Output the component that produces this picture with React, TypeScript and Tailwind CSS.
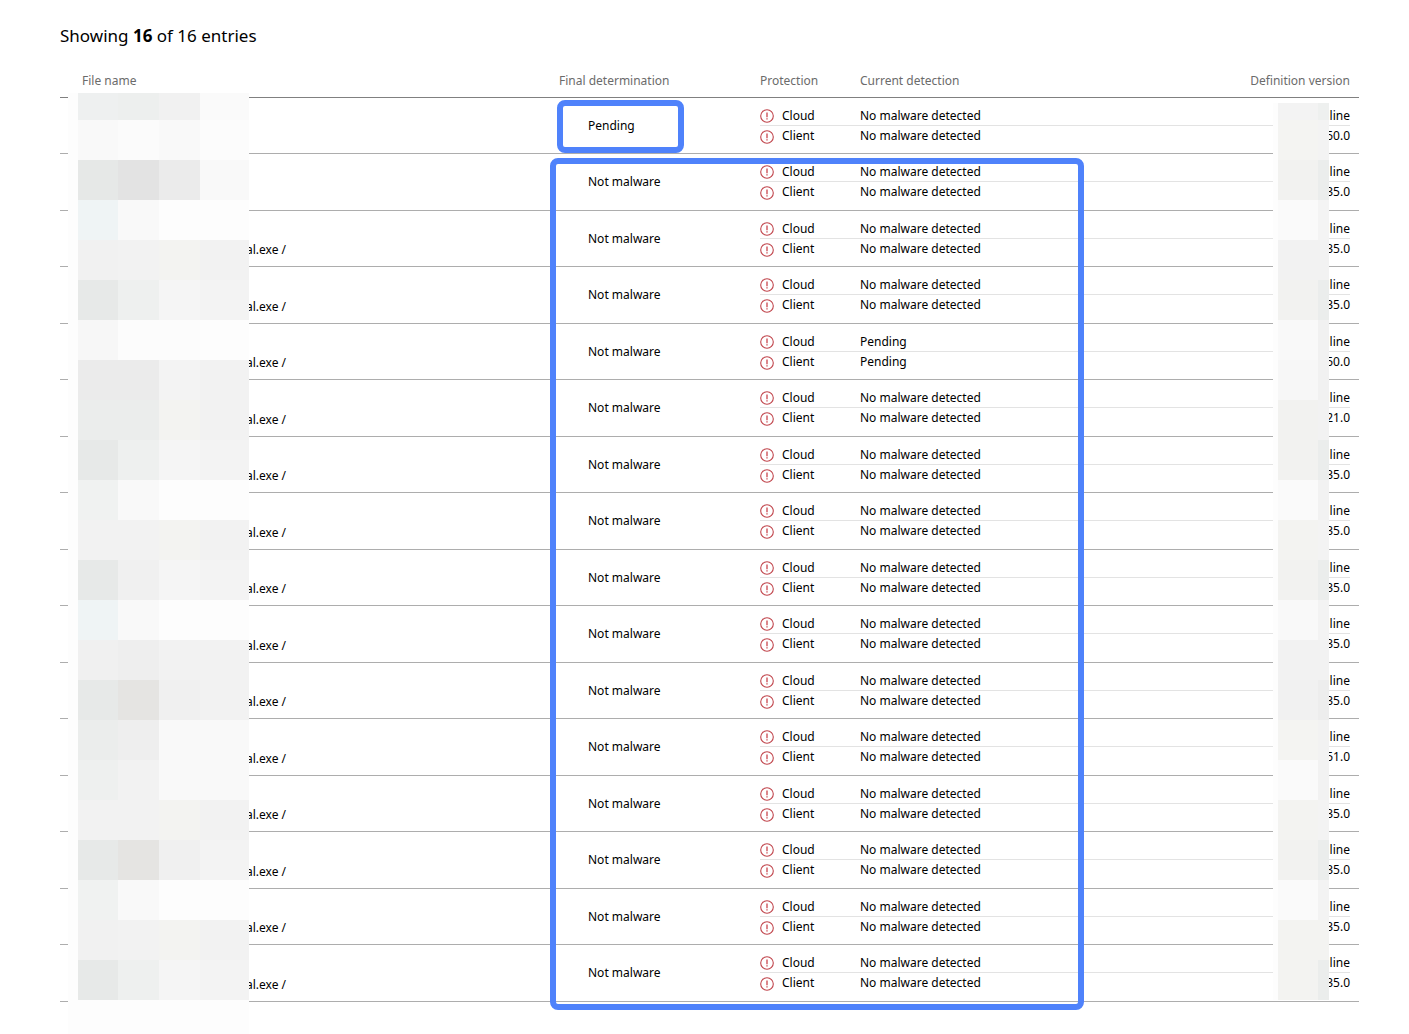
type Entry = {
  determination: string;
  detection: string;
  version: string;
  file?: string;
};

const entries: Entry[] = [
  { determination: 'Pending', detection: 'No malware detected', version: '50.0' },
  { determination: 'Not malware', detection: 'No malware detected', version: '35.0' },
  { determination: 'Not malware', detection: 'No malware detected', version: '35.0', file: 'al.exe /' },
  { determination: 'Not malware', detection: 'No malware detected', version: '35.0', file: 'al.exe /' },
  { determination: 'Not malware', detection: 'Pending', version: '50.0', file: 'al.exe /' },
  { determination: 'Not malware', detection: 'No malware detected', version: '21.0', file: 'al.exe /' },
  { determination: 'Not malware', detection: 'No malware detected', version: '35.0', file: 'al.exe /' },
  { determination: 'Not malware', detection: 'No malware detected', version: '35.0', file: 'al.exe /' },
  { determination: 'Not malware', detection: 'No malware detected', version: '35.0', file: 'al.exe /' },
  { determination: 'Not malware', detection: 'No malware detected', version: '35.0', file: 'al.exe /' },
  { determination: 'Not malware', detection: 'No malware detected', version: '35.0', file: 'al.exe /' },
  { determination: 'Not malware', detection: 'No malware detected', version: '51.0', file: 'al.exe /' },
  { determination: 'Not malware', detection: 'No malware detected', version: '35.0', file: 'al.exe /' },
  { determination: 'Not malware', detection: 'No malware detected', version: '35.0', file: 'al.exe /' },
  { determination: 'Not malware', detection: 'No malware detected', version: '35.0', file: 'al.exe /' },
  { determination: 'Not malware', detection: 'No malware detected', version: '35.0', file: 'al.exe /' },
];

// Pixelated blocks that hide the file names, one row of four tiles at a time.
const fileMosaic = [
  ['bg-[#eef0f0]', 'bg-[#edefee]', 'bg-[#f1f1f1]', 'bg-[#fafafa]'],
  ['bg-[#f9f9f9]', 'bg-[#fbfbfb]', 'bg-[#f9f9f9]', 'bg-[#fcfcfc]'],
  ['bg-[#e6e8e7]', 'bg-[#e3e3e3]', 'bg-[#ebebeb]', 'bg-[#f9f9f9]'],
  ['bg-[#eff4f5]', 'bg-[#f9f9f9]', 'bg-[#fdfdfd]', 'bg-[#fdfdfd]'],
  ['bg-[#f1f1f1]', 'bg-[#f2f2f2]', 'bg-[#f3f3f1]', 'bg-[#f2f2f2]'],
  ['bg-[#e7e9e8]', 'bg-[#eef0ef]', 'bg-[#f5f5f5]', 'bg-[#f3f3f3]'],
  ['bg-[#f7f7f7]', 'bg-[#fcfcfc]', 'bg-[#fcfcfc]', 'bg-[#fdfdfd]'],
  ['bg-[#ebebeb]', 'bg-[#ebebeb]', 'bg-[#f3f3f3]', 'bg-[#f2f2f2]'],
  ['bg-[#ebedec]', 'bg-[#ebedec]', 'bg-[#f3f3f1]', 'bg-[#f2f2f2]'],
  ['bg-[#e7e9e8]', 'bg-[#eef0ef]', 'bg-[#f5f5f5]', 'bg-[#f3f3f3]'],
  ['bg-[#f0f2f1]', 'bg-[#f9f9f9]', 'bg-[#fdfdfd]', 'bg-[#fdfdfd]'],
  ['bg-[#f2f2f2]', 'bg-[#f2f2f2]', 'bg-[#f3f3f1]', 'bg-[#f2f2f2]'],
  ['bg-[#e7e9e8]', 'bg-[#f0f0f0]', 'bg-[#f5f5f5]', 'bg-[#f3f3f3]'],
  ['bg-[#eff4f5]', 'bg-[#f9f9f9]', 'bg-[#fdfdfd]', 'bg-[#fdfdfd]'],
  ['bg-[#f0f0f0]', 'bg-[#eeeeee]', 'bg-[#f2f2f2]', 'bg-[#f2f2f2]'],
  ['bg-[#e7e9e8]', 'bg-[#e5e4e2]', 'bg-[#f0f0f0]', 'bg-[#f2f2f2]'],
  ['bg-[#ebedec]', 'bg-[#eeeeee]', 'bg-[#f9f9f9]', 'bg-[#f9f9f9]'],
  ['bg-[#eef0ef]', 'bg-[#f2f2f2]', 'bg-[#f9f9f9]', 'bg-[#f9f9f9]'],
  ['bg-[#f2f2f2]', 'bg-[#f2f2f2]', 'bg-[#f3f3f1]', 'bg-[#f2f2f2]'],
  ['bg-[#e7e9e8]', 'bg-[#e5e4e2]', 'bg-[#f0f0f0]', 'bg-[#f3f3f3]'],
  ['bg-[#f0f2f1]', 'bg-[#f9f9f9]', 'bg-[#fdfdfd]', 'bg-[#fdfdfd]'],
  ['bg-[#f1f1f1]', 'bg-[#f2f2f2]', 'bg-[#f3f3f1]', 'bg-[#f2f2f2]'],
  ['bg-[#e7e9e8]', 'bg-[#eef0ef]', 'bg-[#f5f5f5]', 'bg-[#f3f3f3]'],
];

const versionMosaic = [
  ['bg-[#f3f3f3]', 'bg-[#eef0ef]'],
  ['bg-[#f4f4f2]', 'bg-[#f3f3f3]'],
  ['bg-[#f2f2f0]', 'bg-[#ebedec]'],
  ['bg-[#fafafa]', 'bg-[#f4f4f4]'],
  ['bg-[#f2f2f2]', 'bg-[#f2f2f2]'],
  ['bg-[#f2f2f0]', 'bg-[#ebedec]'],
  ['bg-[#f9f9f9]', 'bg-[#f1f1f1]'],
  ['bg-[#f7f7f7]', 'bg-[#f1f1f1]'],
  ['bg-[#f2f2f0]', 'bg-[#f2f2f2]'],
  ['bg-[#f2f2f0]', 'bg-[#ebedec]'],
  ['bg-[#fafafa]', 'bg-[#f2f2f2]'],
  ['bg-[#f3f3f1]', 'bg-[#f3f3f3]'],
  ['bg-[#f2f2f0]', 'bg-[#ebedec]'],
  ['bg-[#f9f9f9]', 'bg-[#f3f3f3]'],
  ['bg-[#f2f2f2]', 'bg-[#f2f2f2]'],
  ['bg-[#f1f1f1]', 'bg-[#ededed]'],
  ['bg-[#f4f4f2]', 'bg-[#f2f2f2]'],
  ['bg-[#fafafa]', 'bg-[#f2f2f2]'],
  ['bg-[#f3f3f1]', 'bg-[#f3f3f3]'],
  ['bg-[#f2f2f0]', 'bg-[#ebedec]'],
  ['bg-[#fafafa]', 'bg-[#f3f3f3]'],
  ['bg-[#f3f3f1]', 'bg-[#f3f3f1]'],
  ['bg-[#f3f3f1]', 'bg-[#ebedec]'],
];

function AlertIcon() {
  return (
    <svg className="mb-0.5 h-[14px] w-[14px] shrink-0" viewBox="0 0 14 14" fill="none" aria-hidden="true">
      <circle cx="7" cy="7" r="6.3" stroke="#c0444b" strokeWidth="1.1" />
      <path d="M7 3.5v4.7" stroke="#c9444c" strokeWidth="1.3" />
      <path d="M7 9.2v1.4" stroke="#c9444c" strokeWidth="1.3" />
    </svg>
  );
}

function Protection({ label }: { label: string }) {
  return (
    <div className="flex items-end gap-2">
      <AlertIcon />
      <span>{label}</span>
    </div>
  );
}

function EntryRows({ entry, tall }: { entry: Entry; tall: boolean }) {
  const line = 'border-b border-[#adadad]';
  const subLine = 'border-b border-[#e3e3e3] leading-[18px]';

  return (
    <tbody>
      <tr className="h-7">
        <td rowSpan={2} className={`${line} align-bottom`}>
          <div className="w-[226px] pb-[6px] text-right">{entry.file}</div>
        </td>
        <td rowSpan={2} className={`${line} pl-[29px] align-middle`}>
          {entry.determination}
        </td>
        <td className={`${subLine} align-bottom`}>
          <Protection label="Cloud" />
        </td>
        <td className={`${subLine} align-bottom`}>{entry.detection}</td>
        <td className={`${subLine} text-right align-bottom`}>line</td>
        <td rowSpan={2} className={line} />
      </tr>
      <tr className={tall ? 'h-[29px]' : 'h-7'}>
        <td className={`${line} align-top`}>
          <Protection label="Client" />
        </td>
        <td className={`${line} align-top`}>{entry.detection}</td>
        <td className={`${line} text-right align-top`}>{entry.version}</td>
      </tr>
    </tbody>
  );
}

function FileMosaic() {
  return (
    <div className="absolute top-[29px] left-2 w-[181px] bg-[#fdfdfd] pb-[34px] pl-[10px]" aria-hidden="true">
      {fileMosaic.map((tiles, i) => (
        <div key={i} className={`grid grid-cols-[40px_41px_41px_1fr] ${i === 0 ? 'h-[27px]' : 'h-10'}`}>
          {tiles.map((tile, j) => (
            <div key={j} className={tile} />
          ))}
        </div>
      ))}
    </div>
  );
}

function VersionMosaic() {
  return (
    <div className="absolute top-[39px] right-[30px] w-[56px] bg-[#fdfdfd] pl-[5px]" aria-hidden="true">
      {versionMosaic.map((tiles, i) => (
        <div key={i} className={`grid grid-cols-[40px_1fr] ${i === 0 ? 'h-[17px]' : 'h-10'}`}>
          {tiles.map((tile, j) => (
            <div key={j} className={tile} />
          ))}
        </div>
      ))}
    </div>
  );
}

export default function App() {
  return (
    <main className="bg-white pt-6 pr-[50px] pl-[60px] font-['Noto_Sans',sans-serif] text-black">
      <p className="h-10 text-[17px] leading-6">
        Showing <strong className="font-bold">16</strong> of 16 entries
      </p>
      <div className="relative pb-8">
        <table className="w-full table-fixed border-separate border-spacing-0 text-[12px] leading-5">
          <thead className="text-[#6b6b6b]">
            <tr className="h-[34px] text-left *:border-b *:border-[#808080] *:pb-[6px] *:align-bottom *:font-normal">
              <th className="w-[499px] pl-[22px]">File name</th>
              <th className="w-[201px]">Final determination</th>
              <th className="w-[100px]">Protection</th>
              <th>Current detection</th>
              <th className="w-[150px] text-right">Definition version</th>
              <td className="w-[9px]" />
            </tr>
          </thead>
          {entries.map((entry, i) => (
            <EntryRows key={i} entry={entry} tall={i % 2 === 1} />
          ))}
        </table>
        <FileMosaic />
        <VersionMosaic />
        <div className="absolute top-9 left-[497px] h-[53px] w-[127px] rounded-lg border-6 border-[#4f82fb]" />
        <div className="absolute top-[94px] left-[490px] h-[852px] w-[534px] rounded-lg border-6 border-[#4f82fb]" />
      </div>
    </main>
  );
}
